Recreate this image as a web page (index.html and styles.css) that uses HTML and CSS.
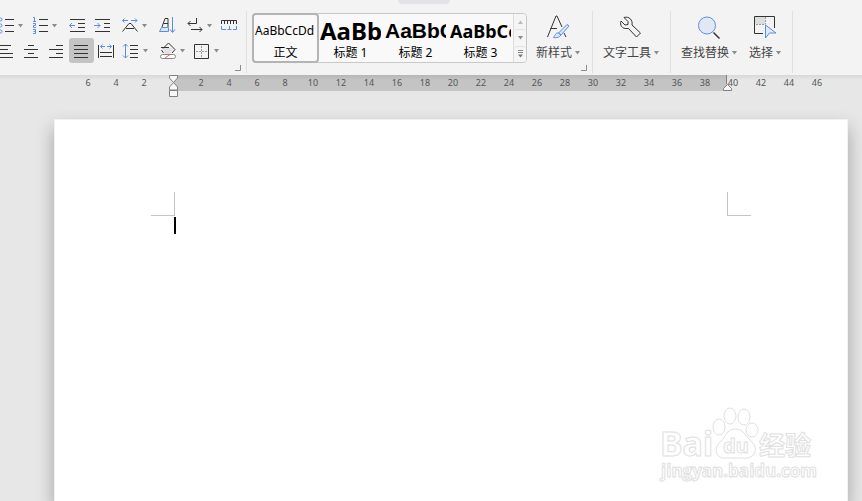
FILE: index.html
```html
<!DOCTYPE html>
<html lang="zh-CN">
<head>
<meta charset="utf-8">
<title>文字文稿</title>
<link rel="stylesheet" href="styles.css">
</head>
<body>
<svg class="defs" aria-hidden="true">
  <symbol id="caret" viewBox="0 0 7 4"><path d="M1 0h5L3.500 3.500z" fill="#8c8c8c"/></symbol>
  <symbol id="launch" viewBox="0 0 6 6"><path d="M5.500 0v5.500H0" fill="none" stroke="#8a8a8a"/></symbol>
</svg>
<header class="ribbon">
  <span class="handle"></span>
  <section class="group paragraph" aria-label="段落">
    <div class="row">
      <div class="cluster">
        <button class="tool drop" aria-label="项目符号"><svg class="icon" viewBox="0 0 17 17"><path class="k" d="M8 2.500h9M8 8.500h9M8 14.500h9"/><g class="b"><circle cx="3.500" cy="2.500" r="1.500"/><circle cx="3.500" cy="8.500" r="1.500"/><circle cx="3.500" cy="14.500" r="1.500"/></g></svg><svg class="caret"><use href="#caret"/></svg></button>
        <button class="tool drop" aria-label="编号"><svg class="icon" viewBox="0 0 17 17"><path class="k" d="M8 2.500h9M8 8.500h9M8 14.500h9"/><path class="b" d="M2 .5h1.500V4M2 4.500h3M2 6.500h2.500v2h-2v2H5M2 12.500h2.500v4H2M2.500 14.500h2"/></svg><svg class="caret"><use href="#caret"/></svg></button>
      </div>
      <div class="cluster">
        <button class="tool" aria-label="减少缩进"><svg class="icon" viewBox="0 0 17 17"><path class="k" d="M1 2.500h15M9 6.500h7M9 10.500h7M1 14.500h15"/><path class="b" d="M6 8.500H.5M3 6L.5 8.500 3 11"/></svg></button>
        <button class="tool" aria-label="增加缩进"><svg class="icon" viewBox="0 0 17 17"><path class="k" d="M1 2.500h15M10 6.500h6M10 10.500h6M1 14.500h15"/><path class="b" d="M0 8.500h6M3.500 6L6 8.500 3.500 11"/></svg></button>
      </div>
      <button class="tool drop" aria-label="字符缩放"><svg class="icon" viewBox="0 0 17 17"><path class="k" d="M1.500 14.500L8 6.500h2l6.500 8M5 11.500h8"/><path class="b" d="M1.500 3.500H7M3.500 1.500l-2 2 2 2M10 3.500h6M14 1.500l2 2-2 2"/></svg><svg class="caret"><use href="#caret"/></svg></button>
      <button class="tool" aria-label="排序"><svg class="icon" viewBox="0 0 17 17"><path class="k" d="M3 10L6 1.500h3V10M4.500 6.500H9"/><path class="b" fill="#dbe6f8" d="M2.500 10.500H9.500v4h-9zM13.500 0v15M11 12.500l2.500 3 2.500-3"/></svg></button>
      <div class="cluster">
        <button class="tool drop" aria-label="显示段落标记"><svg class="icon" viewBox="0 0 17 17"><path class="k" d="M10.500 1v5.500H2M4.500 4L2 6.500 4.500 9M5 12.500h11M13.500 10l2.500 2.500-2.500 2.500"/></svg><svg class="caret"><use href="#caret"/></svg></button>
        <button class="tool" aria-label="制表位"><svg class="icon" viewBox="0 0 17 17"><path class="k" d="M.5 7V3.500h15V7M3.500 4v3M6.500 4v3M9.500 4v3M12.500 4v3"/><path class="b" d="M.5 9v3.500H5M8.500 9v3.500M6.500 12.500h4M12 12.500h3.500V9"/></svg></button>
      </div>
    </div>
    <div class="row">
      <div class="cluster">
        <button class="tool" aria-label="左对齐"><svg class="icon" viewBox="0 0 17 17"><path class="k" d="M1 3.500h12M1 7.500h9M1 11.500h14M1 15.500h14"/></svg></button>
        <button class="tool" aria-label="居中对齐"><svg class="icon" viewBox="0 0 17 17"><path class="k" d="M5 3.500h6M1 7.500h14M5 11.500h6M1 15.500h14"/></svg></button>
        <button class="tool" aria-label="右对齐"><svg class="icon" viewBox="0 0 17 17"><path class="k" d="M8 3.500h7M1 7.500h14M8 11.500h7M1 15.500h14"/></svg></button>
        <button class="tool active" aria-label="两端对齐" aria-pressed="true"><svg class="icon" viewBox="0 0 17 17"><path class="k" d="M1 3.500h14M1 7.500h14M1 11.500h14M1 15.500h14"/></svg></button>
        <button class="tool" aria-label="分散对齐"><svg class="icon" viewBox="0 0 17 17"><path class="k" d="M.5 3v13M15.500 3v13M2 10.500h12M2 14.500h12"/><path class="b" d="M2.500 4.500H7M4.500 2.500l-2 2 2 2M9 4.500h4.500M11.500 2.500l2 2-2 2"/></svg></button>
        <button class="tool drop" aria-label="行距"><svg class="icon" viewBox="0 0 17 17"><path class="k" d="M8 3.500h8M8 7.500h8M8 11.500h8M8 15.500h8"/><path class="b" d="M3.500 2v14M1 4.500L3.500 2 6 4.500M1 13.500L3.500 16 6 13.500"/></svg><svg class="caret"><use href="#caret"/></svg></button>
      </div>
      <div class="cluster">
        <button class="tool drop" aria-label="底纹颜色"><svg class="icon" viewBox="0 0 17 17"><path fill="#e2e2e2" d="M4 6h10l-3 6H6z"/><path class="k" d="M4.500 11L2.500 8M4 6.500l5.500-5.500L16 7.500 13 11M2 5.500h8"/><rect x="1.500" y="12.500" width="15" height="4" rx="2" fill="#fff" stroke="#888"/><path d="M6 16l5-3.500" stroke="#e66"/></svg><svg class="caret"><use href="#caret"/></svg></button>
        <button class="tool drop" aria-label="边框"><svg class="icon" viewBox="0 0 17 17"><path class="k" d="M1.500 2.500h14v14h-14z"/><path d="M8.500 4v11M3 9.500h11" fill="none" stroke="#999" stroke-dasharray="2 1"/></svg><svg class="caret"><use href="#caret"/></svg></button>
      </div>
    </div>
    <button class="launcher" aria-label="段落设置"><svg width="6" height="6"><use href="#launch"/></svg></button>
  </section>

  <section class="group styles" aria-label="样式">
    <div class="gallery">
      <button class="style selected"><span class="sample body">AaBbCcDd</span><span>正文</span></button>
      <button class="style"><span class="sample h1">AaBb</span><span>标题 1</span></button>
      <button class="style"><span class="sample h2">AaBbC</span><span>标题 2</span></button>
      <button class="style"><span class="sample h3">AaBbCc</span><span>标题 3</span></button>
      <div class="scroller">
        <button aria-label="向上"><svg width="7" height="4" viewBox="0 0 7 4"><path d="M1 4h5L3.500.5z" fill="#bbb"/></svg></button>
        <button aria-label="向下"><svg class="caret"><use href="#caret"/></svg></button>
        <button aria-label="更多样式"><svg width="7" height="8" viewBox="0 0 7 8"><path d="M1 .5h5M1 2.500h5" stroke="#888"/><path d="M1 4.500h5L3.500 7.500z" fill="#777"/></svg></button>
      </div>
    </div>
    <button class="big"><svg class="pic" viewBox="0 0 26 26"><path class="k" d="M1.500 24L10 3h1l5 11M4.500 15.500H11M18 20l2 4"/><path class="b" fill="#dce6f7" d="M21 11.500l2 1.500-8 9-2.500-2zM12.500 20c-3-.5-3 2-5 4.500 3 .5 6 0 7.500-2.500z"/></svg><span class="name">新样式<svg class="caret"><use href="#caret"/></svg></span></button>
    <button class="launcher" aria-label="样式设置"><svg width="6" height="6"><use href="#launch"/></svg></button>
  </section>

  <section class="group" aria-label="工具">
    <button class="big"><svg class="pic" viewBox="0 0 26 26"><path class="k" d="M5 4.500l4 4v3l-3 .5-4-4c-1.500 4 1 8 6 7.500h1.500l8 8.500 4-4-8.500-8c1-5-3-9-8-7.500z"/></svg><span class="name">文字工具<svg class="caret"><use href="#caret"/></svg></span></button>
  </section>

  <section class="group" aria-label="编辑">
    <button class="big"><svg class="pic" viewBox="0 0 26 26"><path class="k" d="M16.500 19.500l6 6" stroke-width="1.500"/><circle class="b" cx="10" cy="12.500" r="8.500" fill="#e2e8f3"/></svg><span class="name">查找替换<svg class="caret"><use href="#caret"/></svg></span></button>
    <button class="big"><svg class="pic" viewBox="0 0 26 26"><path fill="#ddd" d="M2 4h10v7H2z"/><path d="M12.500 4v7.500M3 11.500h9" fill="none" stroke="#999" stroke-dasharray="2 1"/><path class="k" d="M10 20.500H1.500v-17h20V15"/><path class="b" fill="#e2e8f3" d="M12.500 12v13l4-5h6.500z"/></svg><span class="name">选择<svg class="caret"><use href="#caret"/></svg></span></button>
  </section>
</header>

<div class="workspace">
  <div class="ruler">
    <div class="ticks before"><span>6</span><span>4</span><span>2</span></div>
    <div class="ticks band">
      <svg class="indent" width="9" height="22" viewBox="0 0 9 22"><path d="M.5.500h8V3l-4 4.500-4-4.500zM4.500 7.500l4 4.500v3h-8v-3zM.5 15.500h8v6h-8z" fill="#f8f8f8" stroke="#808080"/></svg>
      <span>2</span><span>4</span><span>6</span><span>8</span><span>10</span><span>12</span><span>14</span><span>16</span><span>18</span><span>20</span><span>22</span><span>24</span><span>26</span><span>28</span><span>30</span><span>32</span><span>34</span><span>36</span><span>38</span>
      <svg class="indent end" width="9" height="16" viewBox="0 0 9 16"><path d="M3.500 0v9" stroke="#808080"/><path d="M4.500 9.500l4 4v2h-8v-2z" fill="#f8f8f8" stroke="#808080"/></svg>
    </div>
    <div class="ticks after"><span>40</span><span>42</span><span>44</span><span>46</span></div>
  </div>
  <main class="page">
    <div class="corners"><i class="corner left"></i><i class="corner right"></i></div>
    <div class="text"><span class="cursor"></span></div>
    <svg class="watermark" width="160" height="80" viewBox="0 0 160 80" role="img" aria-label="Baidu 经验">
      <g fill="#fff" stroke="#e0e0e0">
        <text class="wm-bai" x="3" y="52">Bai</text>
        <ellipse cx="62" cy="23" rx="6" ry="8"/><ellipse cx="73" cy="12" rx="6" ry="8"/><ellipse cx="87" cy="13" rx="6" ry="8"/><ellipse cx="95" cy="26" rx="6" ry="7"/>
        <path d="M78 25c-9 0-9 9-15 13-6 5-5 15 3 16h24c9-1 11-10 5-16-6-5-8-13-17-13z"/>
        <text class="wm-du" x="66" y="49">du</text>
        <text class="wm-cn" x="102" y="51">经验</text>
        <text class="wm-url" x="4" y="73">jingyan.baidu.com</text>
      </g>
    </svg>
  </main>
</div>
</body>
</html>
```

FILE: styles.css
```css
* { box-sizing: border-box; }
body {
  margin: 0;
  min-height: 100vh;
  display: flex;
  flex-direction: column;
  overflow: hidden;
  font: 12px/16px "Noto Sans", "Noto Sans CJK SC", sans-serif;
  color: #444;
  background: #e7e7e7;
}
button {
  margin: 0;
  padding: 0;
  border: 0;
  background: none;
  font: inherit;
  color: inherit;
}
svg { display: block; flex: none; }
.defs { position: absolute; width: 0; height: 0; }
.k { fill: none; stroke: #333; }
.b { stroke: #5a8fe0; }
.b:not([fill]) { fill: none; }
.caret { width: 7px; height: 4px; }

.ribbon {
  position: relative;
  display: flex;
  height: 75px;
  padding: 11px 0 2px;
  background: #f3f3f3;
}
.handle {
  position: absolute;
  top: 0;
  left: 398px;
  width: 52px;
  height: 4px;
  border-radius: 0 0 16px 16px;
  background: #e3e4e7;
}
.group {
  position: relative;
  display: flex;
  flex: none;
  padding: 0 8px;
  border-right: 1px solid #e0e0e0;
}
.paragraph {
  flex-direction: column;
  width: 247px;
  padding: 2px 0 0;
}
.row { display: flex; gap: 3px; margin-left: -6px; }
.cluster { display: flex; }
.tool {
  display: flex;
  align-items: center;
  flex: none;
  width: 25px;
  height: 25px;
  padding: 0 4px;
  border-radius: 3px;
}
.drop { width: 34px; padding: 0 4px 0 3px; gap: 3px; }
.active { background: #c4c4c4; }
.icon { width: 17px; height: 17px; }
.launcher { position: absolute; right: 5px; bottom: 2px; }

.styles { padding: 2px 9px 0 5px; gap: 7px; }
.gallery {
  display: flex;
  height: 50px;
  border: 1px solid #c8c8c8;
  border-radius: 4px;
  background: #f9f9f9;
  color: #000;
}
.style {
  display: flex;
  flex-direction: column;
  align-items: center;
  width: 65px;
  height: 48px;
  padding: 0 2px;
  overflow: hidden;
}
.selected { outline: 2px solid #b4b4b4; outline-offset: -1px; border-radius: 3px; }
.sample {
  width: 100%;
  height: 31px;
  line-height: 34px;
  overflow: hidden;
  white-space: nowrap;
  text-align: left;
}
.body { font-size: 12px; }
.h1 { font-size: 24px; font-weight: 700; }
.h2 { font: 700 21px/34px "Liberation Sans", sans-serif; }
.h3 { font-size: 18px; font-weight: 700; }
.scroller {
  display: flex;
  flex-direction: column;
  width: 13px;
  border-left: 1px solid #dcdcdc;
}
.scroller button {
  display: flex;
  flex: 1;
  align-items: center;
  justify-content: center;
  border-radius: 3px;
  background: #f5f5f5;
}
.scroller button + button { border-top: 1px solid #e2e2e6; }

.big {
  display: flex;
  flex-direction: column;
  align-items: center;
  height: 50px;
  padding: 0 2px;
}
.pic { width: 26px; height: 26px; }
.name { display: flex; align-items: center; gap: 2px; margin-top: 6px; }
.group:not(.styles) > .big { margin-top: 2px; }
.big + .big { margin-left: 7px; }

.workspace {
  flex: 1;
  display: flex;
  flex-direction: column;
  background: linear-gradient(#d8d8d8, #e7e7e7 5px);
}
.ruler {
  display: flex;
  height: 16px;
  font-size: 9px;
  line-height: 16px;
  color: #555;
}
.ticks { position: relative; display: flex; }
.ticks span { width: 28px; text-align: center; }
.before { width: 173px; padding-right: 15px; justify-content: flex-end; }
.band { padding: 0 8px 0 14px; background: linear-gradient(#b6b6b6, #c4c4c4 5px); }
.after { margin-left: -8px; }
.indent { position: absolute; top: 0; left: -4px; z-index: 1; }
.end { left: auto; right: -5px; }

.page {
  position: relative;
  flex: 1;
  margin: 28px 14px 0 54px;
  padding: 72px 96px 0;
  border: 1px solid #f2f2f2;
  border-bottom: 0;
  background: #fff;
  box-shadow: 0 9px 17px rgba(0, 0, 0, .3);
}
.corners { display: flex; justify-content: space-between; }
.corner { width: 24px; height: 24px; border: 0 solid #c4c4c4; border-bottom-width: 1px; }
.left { border-right-width: 1px; }
.right { border-left-width: 1px; }
.text { padding: 1px 23px; }
.cursor { display: block; width: 2px; height: 17px; background: #000; }
.watermark { position: absolute; right: 30px; bottom: 17px; }
.wm-bai { font: 700 34px "Noto Sans", sans-serif; }
.wm-du { font: 700 20px "Noto Sans", sans-serif; }
.wm-cn { font: 700 26px "Noto Sans CJK SC", sans-serif; }
.wm-url { font: 700 17px "Open Sans", sans-serif; }
```
